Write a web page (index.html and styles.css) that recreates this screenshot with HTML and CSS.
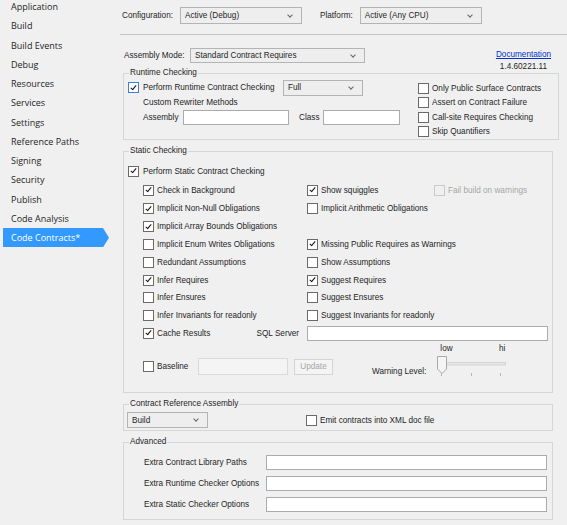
FILE: index.html
```html
<html>
<head>
	<link rel="stylesheet" href="styles.css">
</head>
<body>
	<div class="nav">
		<div class="nav-list">
			<div class="nav-item">Application</div>
			<div class="nav-item">Build</div>
			<div class="nav-item">Build Events</div>
			<div class="nav-item">Debug</div>
			<div class="nav-item">Resources</div>
			<div class="nav-item">Services</div>
			<div class="nav-item">Settings</div>
			<div class="nav-item">Reference Paths</div>
			<div class="nav-item">Signing</div>
			<div class="nav-item">Security</div>
			<div class="nav-item">Publish</div>
			<div class="nav-item">Code Analysis</div>
			<div class="nav-item current">Code Contracts*</div>
		</div>
	</div>

	<div class="page">
		<div class="topbar">
			<span class="cfg-lbl">Configuration:</span>
			<div class="combo cfg">Active (Debug)<i class="chev"></i></div>
			<span class="plat-lbl">Platform:</span>
			<div class="combo cfg">Active (Any CPU)<i class="chev"></i></div>
		</div>

		<div class="mode-row">
			<span class="mode-lbl">Assembly Mode:</span>
			<div class="combo mode">Standard Contract Requires<i class="chev"></i></div>
			<div class="doc">
				<a href="#">Documentation</a><br>
				<span>1.4.60221.11</span>
			</div>
		</div>

		<fieldset class="group runtime">
			<legend>Runtime Checking</legend>
			<div class="rt-cols">
				<div class="rt-left">
					<div class="rt-row1">
						<span class="cb on focus"></span>
						<span class="rt-lbl">Perform Runtime Contract Checking</span>
						<div class="combo full">Full<i class="chev"></i></div>
					</div>
					<div class="rt-row2">Custom Rewriter Methods</div>
					<div class="rt-row3">
						<span class="asm-lbl">Assembly</span>
						<span class="box asm"></span>
						<span class="cls-lbl">Class</span>
						<span class="box cls"></span>
					</div>
				</div>
				<div class="rt-right">
					<div class="opt"><span class="cb"></span>Only Public Surface Contracts</div>
					<div class="opt"><span class="cb"></span>Assert on Contract Failure</div>
					<div class="opt"><span class="cb"></span>Call-site Requires Checking</div>
					<div class="opt"><span class="cb"></span>Skip Quantifiers</div>
				</div>
			</div>
		</fieldset>

		<fieldset class="group static">
			<legend>Static Checking</legend>
			<div class="st-perform"><span class="cb on"></span>Perform Static Contract Checking</div>
			<div class="st-grid">
				<div class="cell"><span class="cb on"></span>Check in Background</div>
				<div class="cell"><span class="cb on"></span>Show squiggles</div>
				<div class="cell off"><span class="cb dis"></span>Fail build on warnings</div>

				<div class="cell"><span class="cb on"></span>Implicit Non-Null Obligations</div>
				<div class="cell"><span class="cb"></span>Implicit Arithmetic Obligations</div>
				<div class="cell"></div>

				<div class="cell"><span class="cb on"></span>Implicit Array Bounds Obligations</div>
				<div class="cell"></div>
				<div class="cell"></div>

				<div class="cell"><span class="cb"></span>Implicit Enum Writes Obligations</div>
				<div class="cell wide"><span class="cb on"></span>Missing Public Requires as Warnings</div>

				<div class="cell"><span class="cb"></span>Redundant Assumptions</div>
				<div class="cell wide"><span class="cb"></span>Show Assumptions</div>

				<div class="cell"><span class="cb on"></span>Infer Requires</div>
				<div class="cell wide"><span class="cb on"></span>Suggest Requires</div>

				<div class="cell"><span class="cb"></span>Infer Ensures</div>
				<div class="cell wide"><span class="cb"></span>Suggest Ensures</div>

				<div class="cell"><span class="cb"></span>Infer Invariants for readonly</div>
				<div class="cell wide"><span class="cb"></span>Suggest Invariants for readonly</div>

				<div class="cell"><span class="cb on"></span>Cache Results<span class="sql-lbl">SQL Server</span></div>
				<div class="cell wide"><span class="box sql"></span></div>
			</div>
			<div class="st-bottom">
				<div class="baseline">
					<span class="cb"></span>
					<span class="base-lbl">Baseline</span>
					<span class="box dis base"></span>
					<span class="btn">Update</span>
				</div>
				<div class="warn">
					<span class="warn-lbl">Warning Level:</span>
					<div class="slider">
						<div class="slider-ends"><span>low</span><span>hi</span></div>
						<svg width="72" height="23" viewBox="0 0 72 23">
							<rect x="3.5" y="7.5" width="66" height="2.5" fill="#e7e7e7" stroke="#d4d4d4"/>
							<path d="M1.5 1.5 H10.5 V14 L6 18.5 L1.5 14 Z" fill="#f5f5f5" stroke="#a9a9a9"/>
							<line x1="5.5" y1="18" x2="5.5" y2="21" stroke="#b5b5b5"/>
							<line x1="35.5" y1="18" x2="35.5" y2="21" stroke="#b5b5b5"/>
							<line x1="64.5" y1="18" x2="64.5" y2="21" stroke="#b5b5b5"/>
						</svg>
					</div>
				</div>
			</div>
		</fieldset>

		<fieldset class="group refasm">
			<legend>Contract Reference Assembly</legend>
			<div class="ref-row">
				<div class="combo build">Build<i class="chev"></i></div>
				<div class="opt emit"><span class="cb"></span>Emit contracts into XML doc file</div>
			</div>
		</fieldset>

		<fieldset class="group advanced">
			<legend>Advanced</legend>
			<div class="adv-row"><span class="adv-lbl">Extra Contract Library Paths</span><span class="box adv"></span></div>
			<div class="adv-row"><span class="adv-lbl">Extra Runtime Checker Options</span><span class="box adv"></span></div>
			<div class="adv-row"><span class="adv-lbl">Extra Static Checker Options</span><span class="box adv"></span></div>
		</fieldset>
	</div>
</body>
</html>
```

FILE: styles.css
```css
body {
	margin: 0px;
	display: flex;
	background: #f0f0f0;
	color: #1e1e1e;
	font-family: "Liberation Sans", Arial, sans-serif;
	font-size: 8.2px;
	overflow: hidden;
}

/* left navigation */
.nav {
	width: 118px;
	flex: none;
}
.nav-list {
	margin-top: -3px;
}
.nav-item {
	height: 19.25px;
	line-height: 19.25px;
	padding-left: 11px;
	font-family: "Open Sans", sans-serif;
	font-size: 9px;
	color: #1e1e1e;
}
.nav-item.current {
	margin-left: 3px;
	width: 106px;
	padding-left: 8px;
	box-sizing: border-box;
	background: #3399ff;
	color: #fff;
	clip-path: polygon(0 0, 100px 0, 106px 50%, 100px 100%, 0 100%);
}

.page {
	flex: 1;
	display: flex;
	flex-direction: column;
}

/* shared controls */
.combo {
	display: flex;
	align-items: center;
	box-sizing: border-box;
	padding-left: 4px;
	background: #eeeeee;
	border: solid 1px #b4b4b4;
	white-space: nowrap;
}
.chev {
	width: 3px;
	height: 3px;
	border: solid #666;
	border-width: 0 1px 1px 0;
	transform: rotate(45deg);
	margin: -2px 9px 0 auto;
}
.box {
	display: block;
	box-sizing: border-box;
	height: 15px;
	background: #fff;
	border: solid 1px #ababab;
}
.box.dis {
	background: #f4f4f4;
	border-color: #dadada;
}
.cb {
	display: grid;
	place-items: center;
	flex: none;
	box-sizing: border-box;
	width: 11px;
	height: 11px;
	margin-right: 3px;
	background: #fff;
	border: solid 1px #6a6a6a;
}
.cb.on::after {
	content: "";
	width: 2px;
	height: 5px;
	border: solid #111;
	border-width: 0 1.5px 1.5px 0;
	transform: rotate(40deg);
	margin-top: -2px;
}
.cb.focus {
	border-color: #3c7fd8;
}
.cb.dis {
	background: #f0f0f0;
	border-color: #c9c9c9;
}

/* top bar */
.topbar {
	display: flex;
	align-items: center;
	margin-left: 2px;
	padding: 7px 0px 10px 2px;
	border-bottom: solid 1px #c6c6c6;
}
.combo.cfg {
	width: 122px;
	height: 17px;
	margin-left: 7px;
}
.plat-lbl {
	margin-left: 18px;
}

.mode-row {
	display: flex;
	align-items: flex-start;
	height: 20px;
	margin-top: 13px;
	padding-left: 6px;
}
.mode-lbl {
	line-height: 15px;
	width: 66px;
}
.combo.mode {
	width: 175px;
	height: 15px;
}
.doc {
	margin-left: auto;
	margin-right: 16px;
	margin-top: 1px;
	line-height: 12px;
	text-align: center;
}
.doc a {
	color: #0033cc;
}

/* group boxes */
.group {
	margin: 0px 14px 0px 5px;
	padding: 1px 0px 0px 4px;
	border: solid 1px #d6d6d6;
	min-width: 0px;
}
.group legend {
	padding: 0px 1px;
	margin-left: 1px;
	line-height: 10px;
}

.runtime {
	margin-right: 8px;
}
.rt-cols {
	display: flex;
}
.rt-left {
	width: 290px;
}
.rt-row1 {
	display: flex;
	align-items: center;
	height: 17px;
}
.rt-row1 .cb {
	margin-right: 4px;
}
.rt-lbl {
	width: 140px;
}
.combo.full {
	width: 80px;
	height: 16px;
}
.rt-row2 {
	height: 13px;
	line-height: 13px;
	padding-left: 15px;
}
.rt-row3 {
	display: flex;
	align-items: center;
	height: 15px;
	margin-top: 1px;
	padding-left: 15px;
}
.asm-lbl {
	width: 40px;
}
.box.asm {
	width: 106px;
}
.cls-lbl {
	margin-left: 10px;
	width: 24px;
}
.box.cls {
	width: 77px;
}
.rt-right {
	padding-top: 2px;
}
.opt {
	display: flex;
	align-items: center;
	height: 14.5px;
}

.static {
	margin-top: 6px;
	padding-top: 6px;
	padding-bottom: 14px;
}
.st-perform {
	display: flex;
	align-items: center;
	height: 18px;
}
.st-perform .cb {
	margin-right: 4px;
}
.st-grid {
	display: grid;
	grid-template-columns: 164px 127px 1fr;
	grid-template-rows: 20px repeat(8, 17.8px);
	padding-left: 15px;
}
.cell {
	display: flex;
	align-items: center;
	white-space: nowrap;
}
.cell.wide {
	grid-column: 2 / 4;
}
.cell.off {
	color: #a6a6a6;
}
.sql-lbl {
	margin-left: auto;
	margin-right: 8px;
}
.box.sql {
	width: 241px;
}

.st-bottom {
	display: flex;
	height: 35px;
	margin-top: 1px;
	padding-left: 15px;
}
.baseline {
	display: flex;
	align-items: center;
	height: 17px;
	margin-top: 15px;
}
.base-lbl {
	width: 41px;
}
.box.base {
	width: 90px;
	height: 17px;
}
.btn {
	box-sizing: border-box;
	width: 39px;
	height: 16px;
	line-height: 14px;
	margin-left: 6px;
	text-align: center;
	color: #a6a6a6;
	background: #f4f4f4;
	border: solid 1px #d4d4d4;
}
.warn {
	display: flex;
	align-items: flex-end;
	margin-left: 39px;
}
.warn-lbl {
	line-height: 10px;
	margin-bottom: 1px;
}
.slider {
	margin-left: 10px;
	width: 72px;
}
.slider-ends {
	display: flex;
	justify-content: space-between;
	height: 12px;
	line-height: 12px;
	padding: 0px 3px 0px 4px;
}
.slider svg {
	display: block;
}

.refasm {
	margin-top: 6px;
	padding-top: 3px;
	padding-bottom: 2px;
}
.ref-row {
	display: flex;
	align-items: center;
}
.combo.build {
	width: 81px;
	height: 16px;
	margin-left: -1px;
}
.opt.emit {
	margin-left: 98px;
}

.advanced {
	margin-top: 6px;
	padding-top: 5px;
	padding-bottom: 4px;
}
.adv-row {
	display: flex;
	align-items: center;
	height: 21px;
	padding-left: 16px;
}
.adv-lbl {
	width: 122px;
}
.box.adv {
	width: 281px;
}
```
